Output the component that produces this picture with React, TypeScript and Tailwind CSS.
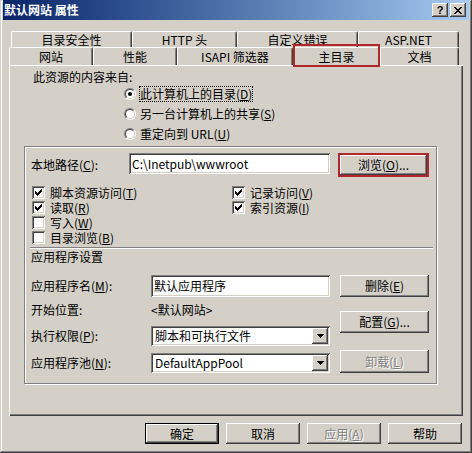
import type { ReactNode } from 'react';

// classic 3D borders
const raised =
  'shadow-[inset_-1px_-1px_#404040,inset_1px_1px_#ffffff,inset_-2px_-2px_#808080]';
const sunken =
  'shadow-[inset_1px_1px_#808080,inset_-1px_-1px_#ffffff,inset_2px_2px_#404040,inset_-2px_-2px_#d4d0c8]';

function K({ k }: { k: string }) {
  return (
    <>
      (<span className="underline underline-offset-1">{k}</span>)
    </>
  );
}

function Btn({
  children,
  className = '',
  disabled,
  def,
}: {
  children: ReactNode;
  className?: string;
  disabled?: boolean;
  def?: boolean;
}) {
  return (
    <div
      className={`flex items-center justify-center bg-[#d4d0c8] ${
        def
          ? 'shadow-[inset_0_0_0_1px_#000000,inset_-2px_-2px_#404040,inset_2px_2px_#ffffff,inset_-3px_-3px_#808080]'
          : raised
      } ${disabled ? 'text-[#808080] [text-shadow:1px_1px_#ffffff]' : ''} ${className}`}
    >
      {children}
    </div>
  );
}

function Tab({ children, className = '', active }: { children: ReactNode; className?: string; active?: boolean }) {
  return (
    <div
      className={`relative h-full flex items-center justify-center pt-[1px] border-t border-l border-white border-r border-r-[#404040] shadow-[inset_-1px_0_#808080] rounded-tl-[2px] rounded-tr-[2px] ${className}`}
    >
      {children}
      {active && (
        <div className="absolute -top-[4px] -left-[1px] -right-[1px] -bottom-[2px] border-2 border-[#b3262c]" />
      )}
    </div>
  );
}

function Radio({ checked }: { checked?: boolean }) {
  return (
    <div className="w-[12px] h-[12px] shrink-0 rounded-full border border-t-[#808080] border-l-[#808080] border-b-white border-r-white">
      <div className="w-full h-full rounded-full border border-t-[#404040] border-l-[#404040] border-b-[#d4d0c8] border-r-[#d4d0c8] bg-white flex items-center justify-center">
        {checked && <div className="w-[4px] h-[4px] rounded-full bg-black" />}
      </div>
    </div>
  );
}

function Check({ checked, children, className = 'h-[15px]' }: { checked?: boolean; children: ReactNode; className?: string }) {
  return (
    <div className={`flex items-center gap-[5px] ${className}`}>
      <div className={`w-[13px] h-[13px] shrink-0 bg-white ${sunken} relative`}>
        {checked && (
          <svg className="absolute left-[3px] top-[3px]" width="7" height="7" viewBox="0 0 7 7" shapeRendering="crispEdges">
            <path d="M0 2h1v1h1v1h1V3h1V2h1V1h1V0h1v3h-1v1h-1v1h-1v1h-1v1h-1V6H1V5H0z" fill="#000" />
          </svg>
        )}
      </div>
      <span className="leading-[13px]">{children}</span>
    </div>
  );
}

function Select({ text }: { text: string }) {
  return (
    <div className={`bg-white ${sunken} w-[179px] h-[20px] flex items-center pl-[4px] pr-[2px]`}>
      <span className="flex-1 whitespace-nowrap">{text}</span>
      <div className={`w-[16px] h-[16px] bg-[#d4d0c8] ${raised} flex items-center justify-center`}>
        <svg width="7" height="4" viewBox="0 0 7 4" shapeRendering="crispEdges">
          <path d="M0 0h7v1H6v1H5v1H4v1H3V3H2V2H1V1H0z" fill="#000" />
        </svg>
      </div>
    </div>
  );
}

export default function App() {
  return (
    <div className="w-[472px] h-[453px] overflow-hidden bg-[#d4d0c8] text-black text-[12px] leading-[14px] font-['Noto_Sans_CJK_SC','Noto_Sans',sans-serif] shadow-[inset_-1px_-1px_#404040,inset_1px_1px_#d4d0c8,inset_-2px_-2px_#808080,inset_2px_2px_#ffffff]">
      {/* title bar */}
      <div className="mx-[3px] h-[20px] bg-linear-to-r from-[#0a246a] to-[#a6caf0] flex items-center pl-[1px] pr-[3px]">
        <span className="text-white font-bold">默认网站 属性</span>
        <div className="ml-auto flex gap-[2px]">
          <div className={`w-[16px] h-[14px] bg-[#d4d0c8] ${raised} flex items-center justify-center font-bold text-[11px] font-['Liberation_Sans',sans-serif]`}>
            ?
          </div>
          <div className={`w-[16px] h-[14px] bg-[#d4d0c8] ${raised} flex items-center justify-center`}>
            <svg width="8" height="7" viewBox="0 0 8 7" shapeRendering="crispEdges">
              <path d="M0 0h2v1h1v1h2V1h1V0h2v1H7v1H6v1H5v1h1v1h1v1h1v1H6V6H5V5H3v1H2v1H0V6h1V5h1V4h1V3H2V2H1V1H0z" fill="#000" />
            </svg>
          </div>
        </div>
      </div>

      {/* tabs */}
      <div className="pt-[11px]">
        <div className="flex ml-[11px] h-[16px]">
          <Tab className="w-[121px]">目录安全性</Tab>
          <Tab className="w-[105px]">HTTP 头</Tab>
          <Tab className="w-[121px]">自定义错误</Tab>
          <Tab className="w-[101px]">ASP.NET</Tab>
        </div>
        <div className="flex ml-[9px] h-[18px]">
          <Tab className="w-[84px]">网站</Tab>
          <Tab className="w-[84px]">性能</Tab>
          <Tab className="w-[116px]">ISAPI 筛选器</Tab>
          <Tab className="w-[87px]" active>
            主目录
          </Tab>
          <Tab className="w-[79px]">文档</Tab>
        </div>
      </div>

      {/* tab page */}
      <div className="ml-[9px] w-[454px] h-[351px] pt-[5px] shadow-[inset_1px_1px_#ffffff,inset_-1px_-1px_#404040,inset_-2px_-2px_#808080]">
        <div className="pl-[24px] h-[14px]">此资源的内容来自:</div>
        <div className="pl-[115px]">
          <div className="h-[20px] flex items-center gap-[4px]">
            <Radio checked />
            <span className="outline-1 outline-dotted outline-black">
              此计算机上的目录<K k="D" />
            </span>
          </div>
          <div className="h-[20px] flex items-center gap-[4px]">
            <Radio />
            <span>
              另一台计算机上的共享<K k="S" />
            </span>
          </div>
          <div className="h-[20px] flex items-center gap-[4px]">
            <Radio />
            <span>
              重定向到 URL<K k="U" />
            </span>
          </div>
        </div>

        {/* group */}
        <div className="ml-[15px] mt-[2px] w-[413px] h-[238px] border border-[#808080] shadow-[inset_1px_1px_#ffffff,1px_1px_#ffffff]">
          <div className="flex items-start mt-[6px] ml-[6px]">
            <div className="w-[98px] h-[21px] flex items-center pt-[2px]">
              本地路径<K k="C" />:
            </div>
            <div className={`w-[201px] h-[21px] bg-white ${sunken} flex items-center px-[3px]`}>
              C:\Inetpub\wwwroot
            </div>
            <div className="ml-[8px] w-[91px] h-[24px] border-2 border-[#b3262c]">
              <Btn className="w-full h-full">
                浏览<K k="O" />...
              </Btn>
            </div>
          </div>

          <div className="flex mt-[7px] ml-[7px]">
            <div className="w-[200px]">
              <Check checked className="h-[16px]">
                脚本资源访问<K k="T" />
              </Check>
              <Check checked>
                读取<K k="R" />
              </Check>
              <Check>
                写入<K k="W" />
              </Check>
              <Check>
                目录浏览<K k="B" />
              </Check>
            </div>
            <div>
              <Check checked className="h-[16px]">
                记录访问<K k="V" />
              </Check>
              <Check checked>
                索引资源<K k="I" />
              </Check>
            </div>
          </div>

          <div className="mt-[2px] ml-[5px] w-[403px] border-t border-t-[#808080] border-b border-b-white" />
          <div className="mt-[1px] ml-[6px] h-[14px]">应用程序设置</div>

          <div className="flex ml-[6px]">
            <div className="w-[299px]">
              <div className="mt-[11px] h-[22px] flex items-center">
                <span className="w-[120px]">
                  应用程序名<K k="M" />:
                </span>
                <div className={`w-[179px] h-[22px] bg-white ${sunken} flex items-center px-[3px]`}>默认应用程序</div>
              </div>
              <div className="h-[26px] flex items-center">
                <span className="w-[120px]">开始位置:</span>
                <span>&lt;默认网站&gt;</span>
              </div>
              <div className="mt-[3px] h-[20px] flex items-center">
                <span className="w-[120px]">
                  执行权限<K k="P" />:
                </span>
                <Select text="脚本和可执行文件" />
              </div>
              <div className="mt-[7px] h-[20px] flex items-center">
                <span className="w-[120px]">
                  应用程序池<K k="N" />:
                </span>
                <Select text="DefaultAppPool" />
              </div>
            </div>
            <div className="ml-[10px] flex flex-col">
              <Btn className="mt-[11px] w-[89px] h-[22px]">
                删除<K k="E" />
              </Btn>
              <Btn className="mt-[14px] w-[89px] h-[22px]">
                配置<K k="G" />...
              </Btn>
              <Btn disabled className="mt-[17px] w-[89px] h-[23px]">
                卸载<K k="L" />
              </Btn>
            </div>
          </div>
        </div>
      </div>

      {/* dialog buttons */}
      <div className="flex gap-[7px] ml-[145px] mt-[7px]">
        <Btn def className="w-[74px] h-[21px]">
          确定
        </Btn>
        <Btn className="w-[74px] h-[21px]">取消</Btn>
        <Btn disabled className="w-[74px] h-[21px]">
          应用<K k="A" />
        </Btn>
        <Btn className="w-[74px] h-[21px]">帮助</Btn>
      </div>
    </div>
  );
}
